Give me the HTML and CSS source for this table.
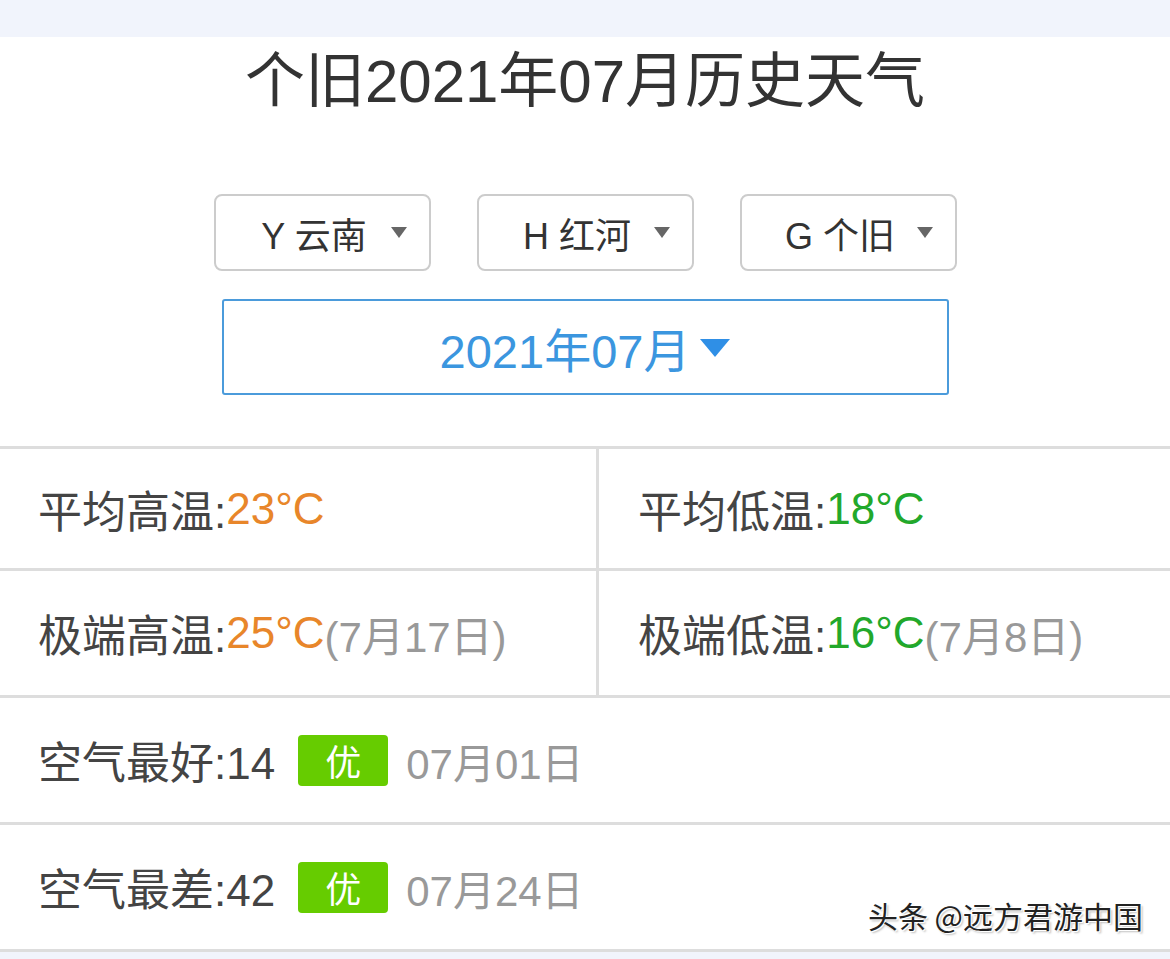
FILE: index.html
```html
<!DOCTYPE html>
<html lang="zh-CN">
<head>
<meta charset="utf-8">
<title>个旧2021年07月历史天气</title>
<link rel="stylesheet" href="styles.css">
</head>
<body>
<div class="topbar"></div>
<main class="page">
  <h1 class="title">个旧2021年07月历史天气</h1>
  <div class="selects">
    <div class="select"><span class="select-text">Y 云南</span><span class="caret"></span></div>
    <div class="select"><span class="select-text">H 红河</span><span class="caret"></span></div>
    <div class="select"><span class="select-text">G 个旧</span><span class="caret"></span></div>
  </div>
  <div class="month">
    <span class="month-text">2021年07月</span><span class="month-caret"></span>
  </div>
  <section class="stats">
    <div class="row split r1">
      <div class="cell left">平均高温:<span class="hot">23°C</span></div>
      <div class="cell right">平均低温:<span class="cold">18°C</span></div>
    </div>
    <div class="row split">
      <div class="cell left">极端高温:<span class="hot">25°C</span><span class="date">(7月17日)</span></div>
      <div class="cell right">极端低温:<span class="cold">16°C</span><span class="date">(7月8日)</span></div>
    </div>
    <div class="row">
      <div class="cell">空气最好:14<span class="badge">优</span><span class="day">07月01日</span></div>
    </div>
    <div class="row last">
      <div class="cell">空气最差:42<span class="badge">优</span><span class="day">07月24日</span></div>
      <div class="watermark">头条 @远方君游中国</div>
    </div>
  </section>
  <div class="bottombar"></div>
</main>
</body>
</html>
```

FILE: styles.css
```css
* { box-sizing: border-box; }
html, body { margin: 0; padding: 0; }
body {
  background: #ffffff;
  font-family: "Liberation Sans", "Noto Sans CJK SC", sans-serif;
  color: #444444;
  width: 1170px;
  height: 959px;
  overflow: hidden;
}
.topbar {
  height: 37px;
  background: #f1f4fc;
}
.page {
  display: flex;
  flex-direction: column;
  align-items: center;
}
.title {
  margin: 6px 0 0;
  font-size: 60px;
  font-weight: normal;
  line-height: 78px;
  color: #333333;
  text-align: center;
}
.selects {
  margin-top: 73px;
  display: flex;
  gap: 46px;
}
.select {
  position: relative;
  width: 217px;
  height: 77px;
  border: 2px solid #cccccc;
  border-radius: 8px;
  display: flex;
  align-items: center;
  justify-content: center;
}
.select-text {
  font-size: 36px;
  color: #333333;
  padding-right: 16px;
}
.caret {
  position: absolute;
  right: 22px;
  top: 31px;
  width: 0;
  height: 0;
  border-left: 8px solid transparent;
  border-right: 8px solid transparent;
  border-top: 11px solid #666666;
}
.month {
  margin-top: 28px;
  width: 727px;
  height: 96px;
  border: 2px solid #4b9bdb;
  border-radius: 3px;
  display: flex;
  align-items: center;
  justify-content: center;
  gap: 10px;
}
.month-text {
  font-size: 47px;
  color: #3b96df;
}
.month-caret {
  width: 0;
  height: 0;
  border-left: 15px solid transparent;
  border-right: 15px solid transparent;
  border-top: 18px solid #2f8fe6;
  margin-top: 2px;
}
.stats {
  margin-top: 51px;
  width: 1170px;
  border-top: 3px solid #dddddd;
}
.row {
  position: relative;
  display: flex;
  height: 127px;
  border-bottom: 3px solid #dddddd;
}
.row.r1 { height: 122px; }
.cell {
  display: flex;
  align-items: center;
  font-size: 44px;
  color: #444444;
  padding-left: 38px;
  white-space: nowrap;
}
.cell.left {
  width: 599px;
  border-right: 3px solid #dddddd;
}
.cell.right {
  flex: 1;
  padding-left: 39px;
}
.hot { color: #e8862a; }
.cold { color: #22a82b; }
.date {
  font-size: 42px;
  color: #999999;
}
.badge {
  display: inline-flex;
  align-items: center;
  justify-content: center;
  width: 90px;
  height: 51px;
  margin-left: 23px;
  background: #66cc00;
  color: #ffffff;
  border-radius: 4px;
  font-size: 36px;
}
.day {
  margin-left: 18px;
  font-size: 42px;
  color: #999999;
}
.watermark {
  position: absolute;
  right: 27px;
  top: 68px;
  font-family: "Noto Sans CJK SC", sans-serif;
  font-size: 30px;
  color: #222222;
  text-shadow: 1px 1px 0 #ffffff, -1px -1px 0 #ffffff, 2px 2px 2px rgba(0,0,0,0.25);
}
.bottombar {
  width: 1170px;
  height: 20px;
  background: #f1f4fc;
}
```
